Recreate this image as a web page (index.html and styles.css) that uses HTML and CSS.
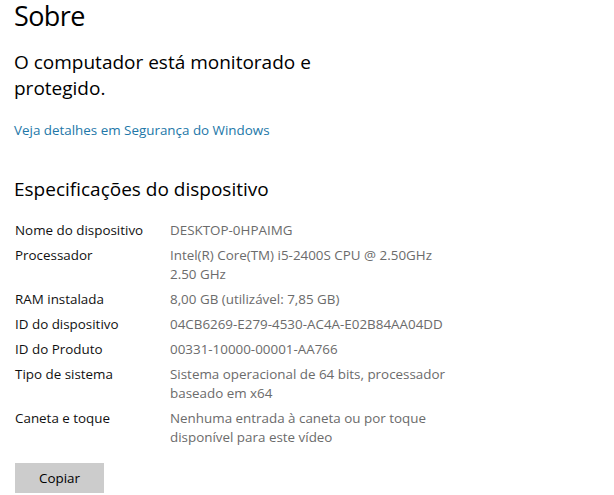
FILE: index.html
```html
<!DOCTYPE html>
<html lang="pt">
<head>
<meta charset="utf-8">
<title>Sobre</title>
<link rel="stylesheet" href="styles.css">
</head>
<body>
<main class="page">
  <h1 class="title">Sobre</h1>
  <p class="status">O computador está monitorado e<br>protegido.</p>
  <a class="link" href="#">Veja detalhes em Segurança do Windows</a>
  <h2 class="section">Especificações do dispositivo</h2>
  <dl class="specs">
    <dt>Nome do dispositivo</dt><dd>DESKTOP-0HPAIMG</dd>
    <dt>Processador</dt><dd>Intel(R) Core(TM) i5-2400S CPU @ 2.50GHz<br>2.50 GHz</dd>
    <dt>RAM instalada</dt><dd>8,00 GB (utilizável: 7,85 GB)</dd>
    <dt>ID do dispositivo</dt><dd>04CB6269-E279-4530-AC4A-E02B84AA04DD</dd>
    <dt>ID do Produto</dt><dd>00331-10000-00001-AA766</dd>
    <dt>Tipo de sistema</dt><dd>Sistema operacional de 64 bits, processador<br>baseado em x64</dd>
    <dt>Caneta e toque</dt><dd>Nenhuma entrada à caneta ou por toque<br>disponível para este vídeo</dd>
  </dl>
  <button class="copy" type="button">Copiar</button>
</main>
</body>
</html>
```
FILE: styles.css
```css
html, body {
  margin: 0;
  padding: 0;
  background: #ffffff;
}
body {
  font-family: "Open Sans", "Noto Sans", sans-serif;
  color: #000;
}
.page {
  display: flex;
  flex-direction: column;
  align-items: flex-start;
  padding: 0 0 0 14px;
}
.title {
  margin: 0;
  font-size: 27px;
  font-weight: 400;
  line-height: 31px;
  letter-spacing: -0.6px;
}
.status {
  margin: 18px 0 0 0;
  font-size: 19px;
  line-height: 26px;
  font-weight: 400;
}
.link {
  margin-top: 20px;
  font-size: 13.4px;
  line-height: 18px;
  color: #2277a8;
  text-decoration: none;
}
.section {
  margin: 37px 0 0 0;
  font-size: 19px;
  font-weight: 400;
  line-height: 26px;
}
.specs {
  margin: 18.5px 0 0 1px;
  display: grid;
  grid-template-columns: 155px auto;
  row-gap: 6px;
  font-size: 13.4px;
  line-height: 19px;
}
.specs dt {
  color: #111;
}
.specs dd {
  margin: 0;
  color: #6b6b6b;
}
.copy {
  margin: 16px 0 0 1px;
  width: 89px;
  height: 30px;
  border: none;
  background: #cccccc;
  font-family: inherit;
  font-size: 13.4px;
  color: #000;
  padding: 0;
}
```
